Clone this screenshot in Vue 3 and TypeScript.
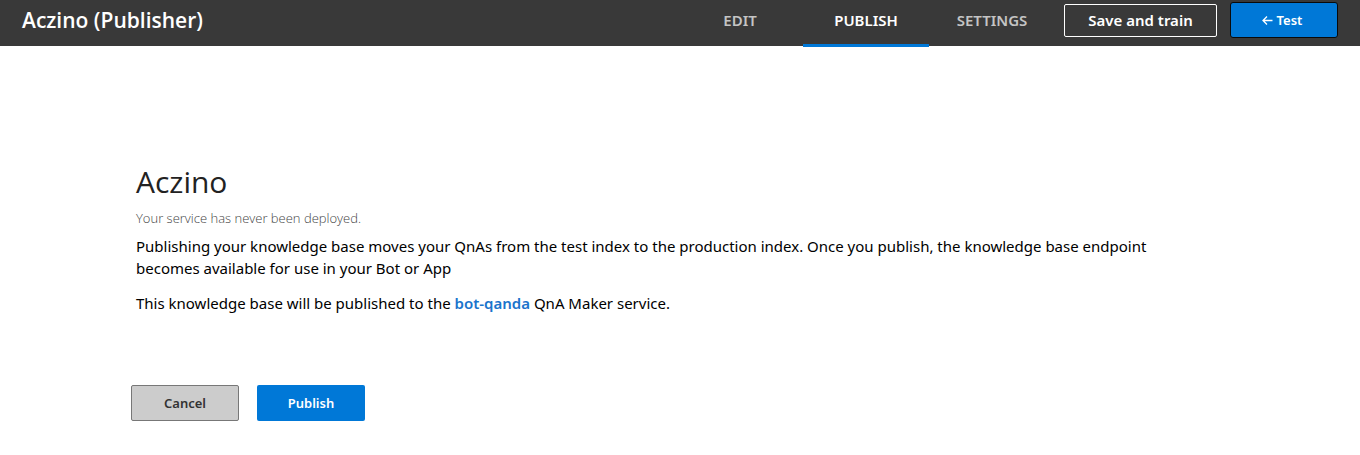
<script setup lang="ts">
import { ref } from 'vue'

const tabs: string[] = ['EDIT', 'PUBLISH', 'SETTINGS']
const active = ref('PUBLISH')
</script>

<template>
  <div class="page">
    <header class="bar">
      <h1 class="brand">Aczino (Publisher)</h1>
      <nav class="tabs">
        <a v-for="tab in tabs" :key="tab" href="#" class="tab" :class="{ active: tab === active }" @click.prevent="active = tab">{{ tab }}</a>
      </nav>
      <div class="actions">
        <button type="button" class="save">Save and train</button>
        <button type="button" class="test">
          <svg width="11" height="9" viewBox="0 0 11 9" fill="none" stroke="currentColor" stroke-width="1.3" aria-hidden="true">
            <path d="M10.5 4.5H1.5M5 0.5L1 4.5L5 8.5" />
          </svg>
          Test
        </button>
      </div>
    </header>
    <main class="content">
      <h2 class="title">Aczino</h2>
      <p class="status">Your service has never been deployed.</p>
      <p class="text">Publishing your knowledge base moves your QnAs from the test index to the production index. Once you publish, the knowledge base endpoint becomes available for use in your Bot or App</p>
      <p class="text">This knowledge base will be published to the <a href="#" class="service">bot-qanda</a> QnA Maker service.</p>
      <div class="buttons">
        <button type="button" class="cancel">Cancel</button>
        <button type="button" class="publish">Publish</button>
      </div>
    </main>
  </div>
</template>

<style>
body { margin: 0; background: #fff; }
</style>

<style scoped>
.page { font-family: "Noto Sans", "Open Sans", sans-serif; color: #000; }
.bar { display: flex; height: 46px; box-sizing: border-box; background: #393939; color: #fff; padding: 0 22px; }
.brand { margin: 0; font-family: "Open Sans", sans-serif; font-size: 21px; line-height: 40px; font-weight: 600; flex: 1; white-space: nowrap; }
.tabs { display: flex; }
.tab { box-sizing: border-box; min-width: 126px; height: 47px; text-align: center; color: #c4c4c4; font-size: 15px; line-height: 40px; font-weight: 600; text-decoration: none; }
.tab.active { color: #fff; border-bottom: 3px solid #0078d7; }
.actions { display: flex; gap: 13px; padding-top: 2px; margin-left: 9px; }
button { font-family: inherit; font-weight: 600; box-sizing: border-box; padding: 0; cursor: pointer; }
.save { width: 153px; height: 33px; margin-top: 2px; padding-bottom: 2px; border: 1px solid #fff; background: transparent; color: #fff; font-size: 15px; border-radius: 2px; }
.test { display: flex; align-items: center; justify-content: center; gap: 4px; width: 108px; height: 36px; padding-right: 4px; border: 1px solid #0a0a0a; background: #0078d7; color: #fff; font-size: 13px; border-radius: 3px; }
.content { padding: 114px 136px 34px; }
.title { margin: 0; font-family: "Open Sans", sans-serif; font-size: 30px; line-height: 44px; font-weight: 400; color: #222; }
.status { margin: 4px 0 7px; font-family: "Open Sans", sans-serif; font-size: 13px; line-height: 20px; font-weight: 300; color: #444; }
.text { max-width: 1040px; margin: 0 0 13px; font-size: 15px; line-height: 22px; }
.service { color: #1a74cc; font-weight: 600; text-decoration: none; }
.buttons { display: flex; gap: 18px; margin: 71px 0 0 -5px; }
.cancel, .publish { width: 108px; height: 36px; font-size: 13px; border-radius: 2px; }
.cancel { background: #ccc; border: 1px solid #777; color: #333; }
.publish { background: #0078d7; border: 0; color: #fff; }
</style>
